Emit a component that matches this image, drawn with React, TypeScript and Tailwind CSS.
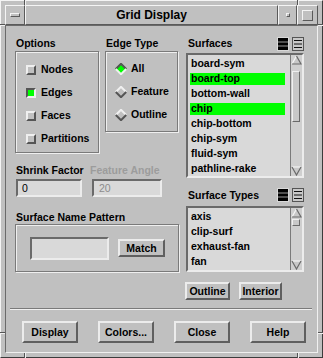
import React from "react";

const raised =
  "border-2 border-t-[#ececec] border-l-[#ececec] border-r-[#5f5f5f] border-b-[#5f5f5f]";
const sunken =
  "border-2 border-t-[#6a6a6a] border-l-[#6a6a6a] border-r-[#ececec] border-b-[#ececec]";
const etched =
  "border border-[#7a7a7a] shadow-[1px_1px_0_#efefef,inset_1px_1px_0_#efefef]";

function Check({ on }: { on?: boolean }) {
  return (
    <div
      className={
        "h-[10px] w-[10px] border-2 " +
        (on
          ? "border-t-[#555] border-l-[#555] border-r-[#efefef] border-b-[#efefef] bg-[#00ff00]"
          : "border-t-[#efefef] border-l-[#efefef] border-r-[#555] border-b-[#555] bg-[#c0c0c0]")
      }
    />
  );
}

function Diamond({ on }: { on?: boolean }) {
  const top = on ? "#555" : "#f0f0f0";
  const bot = on ? "#f0f0f0" : "#555";
  return (
    <svg width="12" height="12" viewBox="0 0 12 12">
      <polygon points="6,0 12,6 6,12 0,6" fill={on ? "#00ff00" : "#c0c0c0"} />
      <polyline points="0.8,6 6,0.8 11.2,6" fill="none" stroke={top} strokeWidth="2" />
      <polyline points="0.8,6 6,11.2 11.2,6" fill="none" stroke={bot} strokeWidth="2" />
      {on && <polygon points="6,3.5 8.5,6 6,8.5 3.5,6" fill="#00ff00" />}
    </svg>
  );
}

function ListIcons() {
  return (
    <div className="flex gap-[3px]">
      <svg width="12" height="14" viewBox="0 0 12 14">
        <rect x="0" y="0" width="12" height="14" fill="#d8d8d8" />
        <rect x="1" y="1" width="10" height="12" fill="#000" />
        <rect x="1" y="4.5" width="10" height="1" fill="#9a9a9a" />
        <rect x="1" y="8.5" width="10" height="1" fill="#9a9a9a" />
      </svg>
      <svg width="12" height="14" viewBox="0 0 12 14">
        <rect x="0" y="0" width="12" height="14" fill="#e6e6e6" />
        <rect x="0.5" y="0.5" width="11" height="13" fill="#c8c8c8" stroke="#555" />
        <rect x="2" y="3" width="8" height="1" fill="#111" />
        <rect x="2" y="6.5" width="8" height="1" fill="#111" />
        <rect x="2" y="10" width="8" height="1" fill="#111" />
      </svg>
    </div>
  );
}

function Arrow({ up }: { up?: boolean }) {
  return (
    <svg width="11" height="10" viewBox="0 0 11 10">
      {up ? (
        <>
          <polygon points="5.5,1 10,9 1,9" fill="#c8c8c8" />
          <polyline points="1,9 5.5,1" stroke="#f4f4f4" strokeWidth="1.2" fill="none" />
          <polyline points="5.5,1 10,9 1,9" stroke="#6a6a6a" strokeWidth="1.2" fill="none" />
        </>
      ) : (
        <>
          <polygon points="1,1 10,1 5.5,9" fill="#c8c8c8" />
          <polyline points="1,1 10,1" stroke="#f4f4f4" strokeWidth="1.2" fill="none" />
          <polyline points="1,1 5.5,9 10,1" stroke="#6a6a6a" strokeWidth="1.2" fill="none" />
        </>
      )}
    </svg>
  );
}

function ListBox({
  items,
  selected,
  height,
  thumbTop,
  thumbH,
}: {
  items: string[];
  selected: string[];
  height: string;
  thumbTop: string;
  thumbH: string;
}) {
  return (
    <div className={`flex w-[118px] ${height} ${sunken} bg-[#d9d9d9]`}>
      <div className="flex flex-1 flex-col pt-[1px] pl-[2px]">
        {items.map((it) => (
          <div key={it} className="flex h-[15px] items-center">
            <div
              className={
                "flex h-[12px] w-[95px] items-center pl-[1px] " +
                (selected.includes(it) ? "bg-[#00ff00]" : "")
              }
            >
              {it}
            </div>
          </div>
        ))}
      </div>
      <div className="flex w-[12px] flex-col items-center border-l border-[#7a7a7a] bg-[#cfcfcf]">
        <Arrow up />
        <div className="relative w-full flex-1">
          <div
            className={`absolute left-[1px] w-[8px] ${thumbTop} ${thumbH} border border-t-[#f0f0f0] border-l-[#f0f0f0] border-r-[#6a6a6a] border-b-[#6a6a6a] bg-[#c8c8c8]`}
          />
        </div>
        <Arrow />
      </div>
    </div>
  );
}

function Btn({ label, w, h }: { label: string; w: string; h: string }) {
  return (
    <div className={`flex ${w} ${h} items-center justify-center ${raised} bg-[#c0c0c0]`}>
      {label}
    </div>
  );
}

export default function App() {
  return (
    <div className="relative h-[358px] w-[323px] bg-[#c0c0c0] font-['Liberation_Sans',Arial,sans-serif] text-[10.5px] font-bold leading-none text-black">
      <div className="flex h-full w-full flex-col border border-t-[#f4f4f4] border-l-[#f4f4f4] border-r-[#3c3c3c] border-b-[#3c3c3c] p-[4px]">
        {/* title bar */}
        <div className="flex h-[20px]">
          <div className="flex w-[20px] items-center justify-center border border-t-[#f4f4f4] border-l-[#f4f4f4] border-r-[#5a5a5a] border-b-[#5a5a5a]">
            <div className="h-[4px] w-[10px] border border-t-[#f4f4f4] border-l-[#f4f4f4] border-r-[#5a5a5a] border-b-[#5a5a5a]" />
          </div>
          <div className="flex flex-1 items-center justify-center border border-t-[#f4f4f4] border-l-[#f4f4f4] border-r-[#5a5a5a] border-b-[#5a5a5a] text-[12px]">
            Grid Display
          </div>
          <div className="flex w-[19px] items-center justify-center border border-t-[#f4f4f4] border-l-[#f4f4f4] border-r-[#5a5a5a] border-b-[#5a5a5a]">
            <div className="h-[4px] w-[4px] border border-t-[#f4f4f4] border-l-[#f4f4f4] border-r-[#5a5a5a] border-b-[#5a5a5a]" />
          </div>
          <div className="flex w-[21px] items-center justify-center border border-t-[#f4f4f4] border-l-[#f4f4f4] border-r-[#5a5a5a] border-b-[#5a5a5a]">
            <div className="h-[11px] w-[11px] border border-t-[#f4f4f4] border-l-[#f4f4f4] border-r-[#5a5a5a] border-b-[#5a5a5a]" />
          </div>
        </div>

        {/* content */}
        <div className="flex flex-1 flex-col border border-t-[#6a6a6a] border-l-[#6a6a6a] border-r-[#f0f0f0] border-b-[#f0f0f0]">
          <div className="flex pl-[9px] pt-[10px]">
            {/* left */}
            <div className="flex w-[164px] flex-col">
              <div className="flex h-[15px] items-center">
                <span className="w-[90px] pl-[1px]">Options</span>
                <span className="pl-[1px]">Edge Type</span>
              </div>
              <div className="flex items-start">
                <div className={`flex h-[102px] w-[84px] flex-col pt-[6px] pl-[10px] ${etched}`}>
                  {[
                    ["Nodes", false],
                    ["Edges", true],
                    ["Faces", false],
                    ["Partitions", false],
                  ].map(([l, on]) => (
                    <div key={l as string} className="flex h-[23px] items-center gap-[5px]">
                      <Check on={on as boolean} />
                      <span>{l as string}</span>
                    </div>
                  ))}
                </div>
                <div className={`ml-[6px] flex h-[81px] w-[73px] flex-col pt-[5px] pl-[9px] ${etched}`}>
                  {[
                    ["All", true],
                    ["Feature", false],
                    ["Outline", false],
                  ].map(([l, on]) => (
                    <div key={l as string} className="flex h-[23px] items-center gap-[4px]">
                      <Diamond on={on as boolean} />
                      <span>{l as string}</span>
                    </div>
                  ))}
                </div>
              </div>
              <div className="mt-[10px] flex h-[14px] items-center">
                <span className="w-[75px] pl-[1px]">Shrink Factor</span>
                <span className="text-[#9c9c9c]">Feature Angle</span>
              </div>
              <div className="mt-[2px] flex">
                <div className={`ml-[1px] flex h-[18px] w-[66px] items-center pl-[4px] ${sunken} bg-[#d9d9d9] font-normal`}>
                  0
                </div>
                <div className={`ml-[10px] flex h-[18px] w-[70px] items-center pl-[5px] ${sunken} bg-[#d9d9d9] font-normal text-[#8c8c8c]`}>
                  20
                </div>
              </div>
              <div className="mt-[14px] flex h-[13px] items-center pl-[1px]">Surface Name Pattern</div>
              <div className={`flex h-[48px] w-[164px] items-center ${etched}`}>
                <div className={`ml-[14px] h-[23px] w-[79px] ${sunken} bg-[#d9d9d9]`} />
                <div className="ml-[9px]">
                  <Btn label="Match" w="w-[47px]" h="h-[18px]" />
                </div>
              </div>
            </div>

            {/* right */}
            <div className="ml-[7px] flex w-[118px] flex-col">
              <div className="flex h-[15px] items-center justify-between">
                <span className="pl-[2px]">Surfaces</span>
                <ListIcons />
              </div>
              <div className="mt-[2px]">
                <ListBox
                  items={[
                    "board-sym",
                    "board-top",
                    "bottom-wall",
                    "chip",
                    "chip-bottom",
                    "chip-sym",
                    "fluid-sym",
                    "pathline-rake",
                  ]}
                  selected={["board-top", "chip"]}
                  height="h-[125px]"
                  thumbTop="top-[6px]"
                  thumbH="h-[51px]"
                />
              </div>
              <div className="mt-[10px] flex h-[14px] items-center justify-between">
                <span className="pl-[2px]">Surface Types</span>
                <ListIcons />
              </div>
              <div className="mt-[4px]">
                <ListBox
                  items={["axis", "clip-surf", "exhaust-fan", "fan"]}
                  selected={[]}
                  height="h-[66px]"
                  thumbTop="top-[1px]"
                  thumbH="h-[7px]"
                />
              </div>
              <div className="mt-[10px] flex">
                <div className="-ml-[1px]">
                  <Btn label="Outline" w="w-[45px]" h="h-[18px]" />
                </div>
                <div className="ml-[9px]">
                  <Btn label="Interior" w="w-[43px]" h="h-[18px]" />
                </div>
              </div>
            </div>
          </div>

          {/* bottom */}
          <div className="mt-auto pl-[4px] pr-[5px] pb-[9px]">
            <div className="h-[2px] border-t border-b border-t-[#7a7a7a] border-b-[#f0f0f0]" />
            <div className="mt-[11px] flex gap-[20px] pl-[12px]">
              <Btn label="Display" w="w-[56px]" h="h-[22px]" />
              <Btn label="Colors..." w="w-[56px]" h="h-[22px]" />
              <Btn label="Close" w="w-[56px]" h="h-[22px]" />
              <Btn label="Help" w="w-[56px]" h="h-[22px]" />
            </div>
          </div>
        </div>
      </div>

      {/* frame corner marks */}
      <div className="absolute left-0 top-[24px] h-[2px] w-[5px] border-t border-b border-t-[#555] border-b-[#f0f0f0]" />
      <div className="absolute right-0 top-[24px] h-[2px] w-[5px] border-t border-b border-t-[#555] border-b-[#f0f0f0]" />
      <div className="absolute left-0 top-[332px] h-[2px] w-[5px] border-t border-b border-t-[#555] border-b-[#f0f0f0]" />
      <div className="absolute right-0 top-[332px] h-[2px] w-[5px] border-t border-b border-t-[#555] border-b-[#f0f0f0]" />
      <div className="absolute left-[24px] top-0 h-[5px] w-[2px] border-l border-r border-l-[#555] border-r-[#f0f0f0]" />
      <div className="absolute left-[297px] top-0 h-[5px] w-[2px] border-l border-r border-l-[#555] border-r-[#f0f0f0]" />
      <div className="absolute bottom-0 left-[24px] h-[5px] w-[2px] border-l border-r border-l-[#555] border-r-[#f0f0f0]" />
      <div className="absolute bottom-0 left-[297px] h-[5px] w-[2px] border-l border-r border-l-[#555] border-r-[#f0f0f0]" />
    </div>
  );
}
